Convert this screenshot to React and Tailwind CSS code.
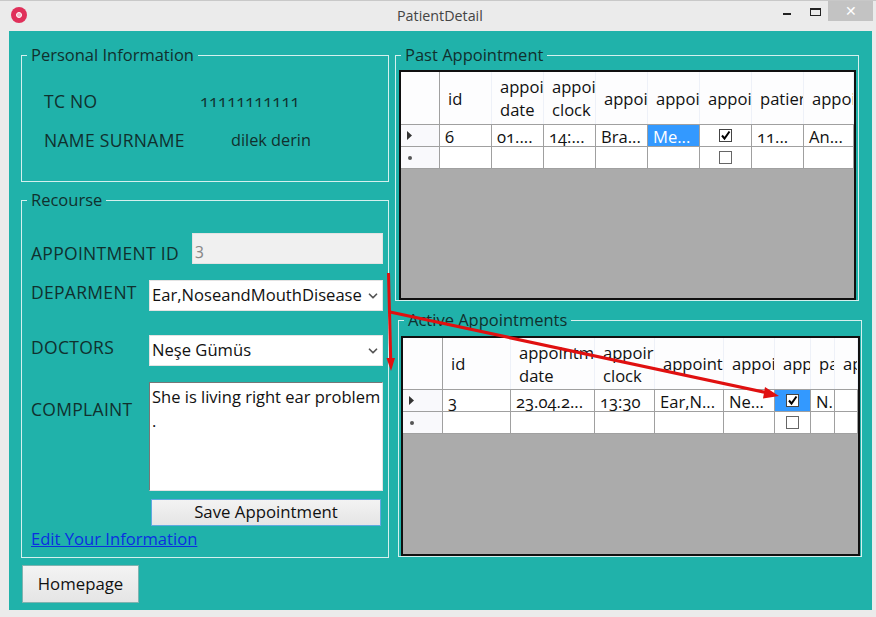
import { ChevronDown } from 'lucide-react';

const pastRows = [
    ['6', '01....', '14:...', 'Bra...', 'Me...', 'check', '11...', 'An...'],
    ['', '', '', '', '', 'empty', '', ''],
];

const activeRows = [
    ['3', '23.04.2...', '13:30', 'Ear,N...', 'Ne...', 'check', 'N.', ''],
    ['', '', '', '', '', 'empty', '', ''],
];

const pastHeaders = [['id'], ['appoi', 'date'], ['appoi', 'clock'], ['appoi'], ['appoi'], ['appoi'], ['patier'], ['appoi']];
const activeHeaders = [['id'], ['appointm', 'date'], ['appoir', 'clock'], ['appoint'], ['appoi'], ['app'], ['pa'], ['ap']];

const GroupBox = ({ title, className, children }) => (
    <div className={`relative border border-[#d5f0ee] ${className}`}>
        <span className="absolute -top-[12px] left-[5px] bg-[#20b2aa] px-[4px] text-[16.5px] leading-[22px] tracking-normal text-[#10302e]">{title}</span>
        {children}
    </div>
);

const CheckBox = ({ checked }) => (
    <span className={`flex h-[13px] w-[13px] items-center justify-center border bg-white ${checked ? 'border-[#444]' : 'border-[#666]'}`}>
        {checked && (
            <svg width="11" height="11" viewBox="0 0 11 11">
                <path d="M2 5.5 L4.5 8.5 L9.5 1.5" fill="none" stroke="#000" strokeWidth="2" />
            </svg>
        )}
    </span>
);

const DataGrid = ({ cols, headers, rows, selected, headerHeight, className }) => (
    <div className={`flex flex-col overflow-hidden border-2 border-[#101010] bg-[#ababab] ${className}`}>
        <div className={`grid ${cols} ${headerHeight} border-b border-[#a0a0a0] bg-[#fdfdfe]`}>
            <div className="border-r border-[#a0a0a0]"></div>
            {headers.map((lines, i) => (
                <div key={i} className="flex flex-col justify-center overflow-hidden whitespace-nowrap border-r border-[#eef1f8] pl-[8px] text-[16.6px] leading-[23px] text-[#111]">
                    {lines.map((line) => <span key={line}>{line}</span>)}
                </div>
            ))}
        </div>
        {rows.map((row, r) => (
            <div key={r} className={`grid ${cols} h-[22px] border-b border-[#a0a0a0] bg-white`}>
                <div className="flex items-center border-r border-[#a0a0a0] bg-[#f9f9fc] pl-[6px]">
                    {r === 0 ? (
                        <svg width="5" height="9" viewBox="0 0 5 9"><path d="M0 0 L5 4.5 L0 9 Z" fill="#333" /></svg>
                    ) : (
                        <span className="ml-px h-[4px] w-[4px] rounded-full bg-[#555]"></span>
                    )}
                </div>
                {row.map((cell, c) => {
                    const isSelected = r === 0 && c === selected;
                    if (cell === 'check' || cell === 'empty') {
                        return (
                            <div key={c} className={`flex items-center justify-center border-r border-[#a0a0a0] ${isSelected ? 'bg-[#3399ff]' : ''}`}>
                                <CheckBox checked={cell === 'check'} />
                            </div>
                        );
                    }
                    return (
                        <div key={c} className={`overflow-hidden whitespace-nowrap border-r border-[#a0a0a0] pl-[5px] text-[16.6px] leading-[24px] oldstyle-nums ${isSelected ? 'bg-[#3399ff] text-white' : 'text-[#111]'}`}>
                            {cell}
                        </div>
                    );
                })}
            </div>
        ))}
    </div>
);

const SelectBox = ({ value }) => (
    <div className="relative h-[31px] w-[234px] border border-[#e3e3e3] bg-white">
        <select defaultValue={value} className="h-full w-full appearance-none bg-white pb-[1px] pl-[2px] text-[16.6px] tracking-normal text-[#111]">
            <option>{value}</option>
        </select>
        <ChevronDown className="pointer-events-none absolute right-[2px] top-[8px] h-[14px] w-[14px] text-[#555]" strokeWidth={3} />
    </div>
);

const App = () => {
    return (
        <div className="relative flex h-[617px] w-[876px] flex-col border-t border-[#c8c8c8] bg-[#ebebeb] font-['Open_Sans','Noto_Sans',sans-serif] text-[#10302e]">
            {/* Barre de titre */}
            <div className="flex h-[30px] shrink-0 items-start">
                <div className="ml-[11px] mt-[6px] flex h-[16px] w-[16px] items-center justify-center rounded-full bg-[#e0305a]">
                    <span className="h-[6px] w-[6px] rounded-full border border-[#fff] bg-[#f3b8c6]"></span>
                </div>
                <div className="ml-[370px] mt-[6px] text-[14.3px] leading-[18px] text-[#444]">PatientDetail</div>
                <div className="ml-auto flex items-start">
                    <span className="mr-[19px] mt-[12px] h-[2px] w-[8px] bg-[#222]"></span>
                    <span className="mr-[7px] mt-[7px] h-[8px] w-[11px] border border-t-2 border-[#222]"></span>
                    <div className="mr-[3px] flex h-[20px] w-[45px] items-center justify-center bg-[#c3c3c3] text-[14px] leading-none text-white">✕</div>
                </div>
            </div>

            <div className="ml-[9px] flex h-[579px] w-[863px] gap-[6px] bg-[#20b2aa] pl-[12px] pt-[24px]">
                {/* Colonne gauche */}
                <div className="flex w-[368px] flex-col items-start">
                    <GroupBox title="Personal Information" className="h-[127px] w-full shrink-0 text-[16.3px]">
                        <div className="flex pl-[22px] pt-[33px] leading-[24px]">
                            <span className="w-[156px] text-[17.5px] tracking-[0.3px]">TC NO</span>
                            <span className="text-[16.6px] oldstyle-nums">11111111111</span>
                        </div>
                        <div className="flex pl-[22px] pt-[15px] leading-[24px]">
                            <span className="w-[187px] text-[17.5px] tracking-[0.3px]">NAME SURNAME</span>
                            <span>dilek derin</span>
                        </div>
                    </GroupBox>

                    <GroupBox title="Recourse" className="mt-[18px] h-[358px] w-full shrink-0 text-[17.5px] tracking-[0.3px]">
                        <div className="flex flex-col pl-[9px] pr-[5px] pt-[32px]">
                            <div className="flex h-[31px] items-start justify-between">
                                <span className="pt-[8px] leading-[24px]">APPOINTMENT ID</span>
                                <input readOnly value="3" className="h-[31px] w-[191px] border border-[#e3e3e3] bg-[#f0f0f0] pl-[2px] text-[16.6px] tracking-normal text-[#888] oldstyle-nums" />
                            </div>
                            <div className="mt-[16px] flex items-start justify-between">
                                <span className="leading-[24px]">DEPARMENT</span>
                                <SelectBox value="Ear,NoseandMouthDisease" />
                            </div>
                            <div className="mt-[24px] flex items-start justify-between">
                                <span className="leading-[24px]">DOCTORS</span>
                                <SelectBox value="Neşe Gümüs" />
                            </div>
                            <div className="mt-[16px] flex items-start justify-between">
                                <span className="pt-[15px] leading-[24px]">COMPLAINT</span>
                                <textarea
                                    readOnly
                                    defaultValue={"She is living right ear problem\n."}
                                    className="h-[109px] w-[234px] resize-none overflow-hidden border border-[#e3e3e3] border-l-[#777] border-t-[#777] bg-white pl-[2px] pt-[2px] text-[16.5px] leading-[24px] tracking-normal text-[#111]"
                                />
                            </div>
                            <div className="mt-[8px] flex justify-end pr-[2px]">
                                <button className="h-[27px] w-[230px] border border-[#60a8e0] bg-linear-to-b from-[#f3f3f3] to-[#e5e5e5] text-[16.8px] leading-none tracking-normal text-[#111]">Save Appointment</button>
                            </div>
                            <a href="#" className="mt-[1px] w-fit text-[16.6px] leading-[24px] tracking-normal text-[#0b2fe0] underline">Edit Your Information</a>
                        </div>
                    </GroupBox>

                    <button className="ml-px mt-[7px] h-[38px] w-[117px] border border-[#7fb3b0] bg-linear-to-b from-[#f3f3f3] to-[#e5e5e5] text-[16.8px] text-[#111]">Homepage</button>
                </div>

                {/* Colonne droite */}
                <div className="flex flex-col items-start">
                    <GroupBox title="Past Appointment" className="h-[246px] w-[464px] shrink-0 pl-[3px] pt-[14px]">
                        <DataGrid
                            className="h-[230px] w-[457px]"
                            cols="grid-cols-[39px_52px_52px_52px_52px_52px_52px_52px_50px]"
                            headerHeight="h-[53px]"
                            headers={pastHeaders}
                            rows={pastRows}
                            selected={4}
                        />
                    </GroupBox>

                    <GroupBox title="Active Appointments" className="ml-[3px] mt-[19px] h-[237px] w-[464px] shrink-0 pl-[2px] pt-[15px]">
                        <DataGrid
                            className="h-[220px] w-[459px]"
                            cols="grid-cols-[40px_68px_84px_60px_69px_51px_36px_24px_23px]"
                            headerHeight="h-[52px]"
                            headers={activeHeaders}
                            rows={activeRows}
                            selected={5}
                        />
                    </GroupBox>
                </div>
            </div>

            {/* Flèches rouges par-dessus la capture */}
            <svg className="pointer-events-none absolute left-0 top-0" width="876" height="617" viewBox="0 0 876 617">
                <path d="M388.5 272 L390.7 358" stroke="#e01010" strokeWidth="3" fill="none" />
                <path d="M386.5 357 L395 357 L391 370 Z" fill="#e01010" />
                <path d="M390 311 L768 392" stroke="#e01010" strokeWidth="3.2" fill="none" />
                <path d="M765 386 L779 395 L763 397.5 Z" fill="#e01010" />
            </svg>
        </div>
    );
};

export default App;
